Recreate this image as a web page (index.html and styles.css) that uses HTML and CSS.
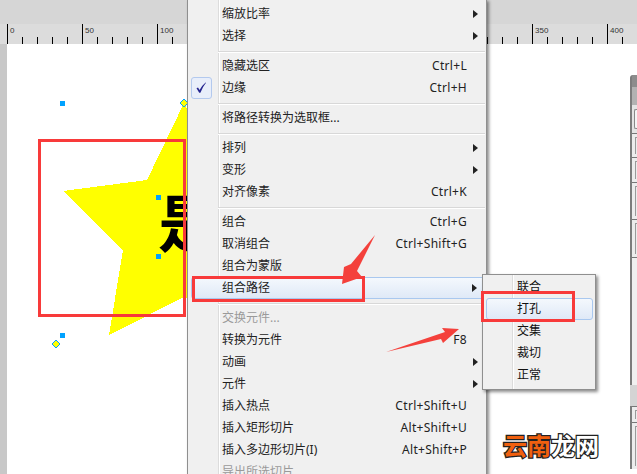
FILE: index.html
```html
<!DOCTYPE html>
<html lang="zh-CN">
<head>
  <meta charset="UTF-8">
  <title>组合路径</title>
  <link rel="stylesheet" href="styles.css">
</head>
<body>
  <div class="app">
    <div class="toolbar"></div>
    <div class="ruler">
      <span>0</span><span>50</span><span>100</span><span></span><span></span><span></span><span></span><span>350</span><span>400</span>
    </div>

    <div class="workspace">
      <div class="gutter"></div>
      <div class="canvas">
        <svg class="art" width="630" height="430" viewBox="7 44 630 430">
          <polygon class="star" points="184,103 221,180 305,191 245,250 258,335 184,297 109,335 123,250 63,191 147,180"/>
        </svg>
        <div class="big-text">是</div>
        <svg class="art" width="630" height="430" viewBox="7 44 630 430">
          <rect class="handle" x="60" y="101" width="5" height="5"/>
          <rect class="handle" x="156" y="195" width="5" height="5"/>
          <rect class="handle" x="156" y="254" width="5" height="5"/>
          <rect class="handle" x="60" y="333" width="5" height="5"/>
          <polygon class="diamond" points="184,99 188,103 184,107 180,103"/>
          <polygon class="diamond" points="56,340 60,344 56,348 52,344"/>
        </svg>
        <div class="logo"><em>云南</em>龙网</div>
      </div>
    </div>

    <div class="panel">
      <div class="panel-title"></div>
      <div class="panel-head"></div>
      <div class="panel-tool"><i></i></div>
      <div class="panel-row h24"><i></i></div>
      <div class="panel-row h25"><i></i></div>
      <div class="panel-row h37"><i></i></div>
      <div class="panel-row h38"><i></i></div>
      <div class="panel-empty"></div>
      <div class="panel-bar"></div>
      <div class="panel-row h16"><i></i></div>
      <div class="panel-row h47"><i></i></div>
    </div>

    <div class="menu main-menu">
      <div class="item"><span class="icon"></span><span class="label">缩放比率</span><span class="key"></span><span class="more"></span></div>
      <div class="item"><span class="icon"></span><span class="label">选择</span><span class="key"></span><span class="more"></span></div>
      <div class="sep"></div>
      <div class="item"><span class="icon"></span><span class="label">隐藏选区</span><span class="key">Ctrl+L</span><span class="nomore"></span></div>
      <div class="item">
        <span class="icon checked">
          <svg width="12" height="12" viewBox="0 0 12 12"><path d="M0.5 6.2 L2 5.6 L3.6 8 Q5.6 3.6 9.6 0.4 L10 0.8 Q6.4 5.2 4.4 10.8 L3.2 10.8 Z"/></svg>
        </span>
        <span class="label">边缘</span><span class="key">Ctrl+H</span><span class="nomore"></span>
      </div>
      <div class="sep"></div>
      <div class="item"><span class="icon"></span><span class="label">将路径转换为选取框...</span></div>
      <div class="sep"></div>
      <div class="item"><span class="icon"></span><span class="label">排列</span><span class="key"></span><span class="more"></span></div>
      <div class="item"><span class="icon"></span><span class="label">变形</span><span class="key"></span><span class="more"></span></div>
      <div class="item"><span class="icon"></span><span class="label">对齐像素</span><span class="key">Ctrl+K</span><span class="nomore"></span></div>
      <div class="sep"></div>
      <div class="item"><span class="icon"></span><span class="label">组合</span><span class="key">Ctrl+G</span><span class="nomore"></span></div>
      <div class="item"><span class="icon"></span><span class="label">取消组合</span><span class="key">Ctrl+Shift+G</span><span class="nomore"></span></div>
      <div class="item"><span class="icon"></span><span class="label">组合为蒙版</span></div>
      <div class="item active"><span class="icon"></span><span class="label">组合路径</span><span class="key"></span><span class="more"></span></div>
      <div class="sep"></div>
      <div class="item disabled"><span class="icon"></span><span class="label">交换元件...</span></div>
      <div class="item"><span class="icon"></span><span class="label">转换为元件</span><span class="key">F8</span><span class="nomore"></span></div>
      <div class="item"><span class="icon"></span><span class="label">动画</span><span class="key"></span><span class="more"></span></div>
      <div class="item"><span class="icon"></span><span class="label">元件</span><span class="key"></span><span class="more"></span></div>
      <div class="item"><span class="icon"></span><span class="label">插入热点</span><span class="key">Ctrl+Shift+U</span><span class="nomore"></span></div>
      <div class="item"><span class="icon"></span><span class="label">插入矩形切片</span><span class="key">Alt+Shift+U</span><span class="nomore"></span></div>
      <div class="item"><span class="icon"></span><span class="label">插入多边形切片(I)</span><span class="key">Alt+Shift+P</span><span class="nomore"></span></div>
      <div class="item disabled"><span class="icon"></span><span class="label">导出所选切片</span></div>
    </div>

    <div class="menu sub-menu">
      <div class="item">联合</div>
      <div class="item active">打孔</div>
      <div class="item">交集</div>
      <div class="item">裁切</div>
      <div class="item">正常</div>
    </div>

    <!-- annotations drawn on top of the screenshot -->
    <div class="mark mark-star"></div>
    <div class="mark mark-item"></div>
    <div class="mark mark-sub"></div>
    <svg class="arrows" width="637" height="474" viewBox="0 0 637 474">
      <polygon points="375,235 351,264 344,267 342,284 362,277 357,271"/>
      <polygon points="386,352 445,332 442,328 459,329 443,343 441,339"/>
    </svg>
  </div>
</body>
</html>
```

FILE: styles.css
```css
* {
  box-sizing: border-box;
}

html, body {
  margin: 0;
  height: 100%;
  overflow: hidden;
}

body {
  font-family: "Noto Sans", "Noto Sans CJK SC", sans-serif;
  font-size: 12px;
  color: #222;
}

.app {
  position: relative;
  width: 637px;
  height: 474px;
  overflow: hidden;
  display: flex;
  flex-direction: column;
  background-color: #fff;
}

.toolbar {
  height: 24px;
  background-color: #d6d6d6;
  flex: none;
}

/* ruler: 1.5px per unit, long tick every 50, short tick every 10 */
.ruler {
  height: 20px;
  flex: none;
  display: flex;
  padding-left: 7px;
  background-color: #dcdcdc;
  background-image:
    linear-gradient(90deg, #000 1px, transparent 1px),
    linear-gradient(90deg, #000 1px, transparent 1px);
  background-size: 75px 20px, 15px 7px;
  background-position: 7px 0, 7px 13px;
  background-repeat: repeat-x;
}

.ruler span {
  width: 75px;
  flex: none;
  padding: 2px 0 0 3px;
  font-family: "Liberation Sans", sans-serif;
  font-size: 8px;
  line-height: 9px;
  color: #333;
}

.workspace {
  flex: 1;
  display: flex;
  min-height: 0;
}

.gutter {
  width: 7px;
  flex: none;
  background-color: #c8c8c8;
}

.canvas {
  position: relative;
  flex: 1;
  background-color: #fff;
}

.art {
  position: absolute;
  left: 0;
  top: 0;
}

.star {
  fill: #ffff00;
  shape-rendering: crispEdges;
}

.handle {
  fill: #00a2ff;
}

.diamond {
  fill: #ffff00;
  stroke: #00a2ff;
  stroke-width: 1;
}

.big-text {
  position: absolute;
  left: 151px;
  top: 141px;
  font-family: "Noto Sans CJK SC", sans-serif;
  font-size: 62px;
  font-weight: 700;
  line-height: 70px;
  color: #000;
}

.logo {
  position: absolute;
  left: 496px;
  top: 384px;
  font-family: "Noto Sans CJK SC", sans-serif;
  font-size: 24px;
  font-weight: 700;
  line-height: 34px;
  color: #fff;
  -webkit-text-stroke: 2.5px #222;
  paint-order: stroke fill;
}

.logo em {
  font-style: normal;
  color: #f0600f;
}

/* right hand floating panel, only its left edge is visible */
.panel {
  position: absolute;
  left: 630px;
  top: 75px;
  width: 7px;
  border-left: 2px solid #7c7c7c;
  border-top-left-radius: 3px;
  background-color: #efefef;
}

.panel-title {
  height: 12px;
  background-color: #8c8c8c;
}

.panel-head {
  height: 18px;
  background-color: #b2b2b2;
}

.panel-tool {
  height: 28px;
  padding: 4px 0 4px 2px;
  background-color: #e4e4e4;
}

.panel-tool i {
  display: block;
  height: 100%;
  border: 1px solid #888;
  border-right: 0;
  border-radius: 2px 0 0 2px;
  background-color: #f4f4f4;
}

.panel-row {
  padding: 3px 0 3px 3px;
  border-top: 1px solid #777;
  background-color: #ececec;
}

.panel-row i {
  display: block;
  height: 100%;
  border-left: 1px solid #999;
  border-top: 1px solid #999;
}

.h16 { height: 16px; }
.h24 { height: 24px; }
.h25 { height: 25px; }
.h37 { height: 37px; }
.h38 { height: 38px; }
.h47 { height: 47px; }

.panel-empty {
  height: 128px;
  border-top: 1px solid #777;
  background-color: #f0f0f0;
}

.panel-bar {
  height: 21px;
  margin-left: -2px;
  background-color: #d4d4d4;
}

/* context menus */
.menu {
  position: absolute;
  border: 1px solid #8f8f8f;
  background-color: #f0f0f0;
  box-shadow: 2px 2px 3px rgba(0, 0, 0, 0.45);
}

.main-menu {
  left: 187px;
  top: -1px;
  width: 300px;
  height: 490px;
  padding-top: 3px;
  background-image: linear-gradient(90deg, transparent 30px, #dcdcdc 30px, #dcdcdc 31px, #fff 31px, #fff 32px, transparent 32px);
}

.sub-menu {
  left: 482px;
  top: 274px;
  width: 114px;
  height: 116px;
  padding-top: 1px;
  color: #111;
  background-image: linear-gradient(90deg, transparent 29px, #dcdcdc 29px, #dcdcdc 30px, #fff 30px, #fff 31px, transparent 31px);
}

.sep {
  height: 2px;
  margin: 4px 1px 2px 30px;
  border-top: 1px solid #d8d8d8;
  border-bottom: 1px solid #fff;
}

.item {
  display: flex;
  align-items: center;
  height: 22px;
  line-height: 22px;
  white-space: nowrap;
}

.main-menu .item {
  margin: 0 1px 0 3px;
  border: 1px solid transparent;
  border-width: 1px 0;
}

.sub-menu .item {
  margin: 0 2px 0 3px;
  padding-left: 30px;
  border: 1px solid transparent;
}

.item.active {
  border: 1px solid #a9c8ef;
  border-radius: 3px;
  background: linear-gradient(#f4f8fd, #dfe9f7);
}

.main-menu .item.active {
  border-width: 1px;
}

.main-menu .item.active .icon {
  width: 20px;
}

.item.disabled {
  color: #9a9a9a;
}

.icon {
  width: 21px;
  height: 22px;
  flex: none;
  display: flex;
  align-items: center;
  justify-content: center;
  border-radius: 3px;
}

.icon.checked {
  border: 1px solid #b3c9ee;
  background-color: #e8eefa;
}

.icon svg {
  fill: #24248f;
}

.label {
  margin-left: 10px;
}

.key {
  flex: 1;
  text-align: right;
  letter-spacing: 0.3px;
}

.nomore {
  width: 18px;
  flex: none;
}

.more {
  width: 18px;
  height: 9px;
  flex: none;
  position: relative;
}

.more::after {
  content: "";
  position: absolute;
  left: 6px;
  top: 0;
  border-left: 5px solid #222;
  border-top: 4.5px solid transparent;
  border-bottom: 4.5px solid transparent;
}

/* red annotations */
.mark {
  position: absolute;
  border: 3px solid #f83a3a;
}

.mark-star {
  left: 38px;
  top: 139px;
  width: 148px;
  height: 178px;
}

.mark-item {
  left: 192px;
  top: 276px;
  width: 173px;
  height: 26px;
}

.mark-sub {
  left: 481px;
  top: 291px;
  width: 94px;
  height: 31px;
}

.arrows {
  position: absolute;
  left: 0;
  top: 0;
  fill: #f4413c;
}
```
